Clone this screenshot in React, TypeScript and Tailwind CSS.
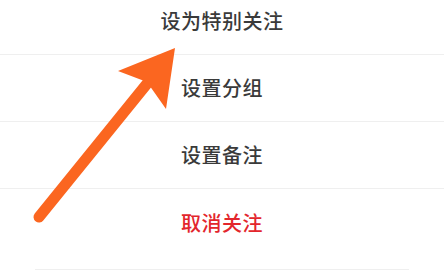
import React from 'react';

const ITEMS = [
  { label: '设为特别关注', danger: false },
  { label: '设置分组', danger: false },
  { label: '设置备注', danger: false },
  { label: '取消关注', danger: true },
];

const Arrow = () => (
  <svg className="absolute left-0 top-0 pointer-events-none" width="444" height="270" viewBox="0 0 444 270">
    <line x1="39" y1="217" x2="150" y2="80" stroke="#fb6620" strokeWidth="11" strokeLinecap="round" />
    <polygon points="175,48 118,71 147,82 166,109" fill="#fb6620" />
  </svg>
);

export default function App() {
  return (
    <div
      className="relative w-[444px] h-[270px] overflow-hidden bg-white"
      style={{ fontFamily: '"Noto Sans CJK SC", "Noto Sans", sans-serif' }}
    >
      <div className="flex flex-col -mt-3">
        {ITEMS.map((item, i) => (
          <div
            key={item.label}
            className={`h-[67px] flex items-center justify-center ${i < ITEMS.length - 1 ? 'border-b border-[#efefef]' : ''}`}
          >
            <span
              className={`text-[20px] font-medium tracking-[0.5px] ${item.danger ? 'text-[#e3262c]' : 'text-[#3a3a3a]'}`}
            >
              {item.label}
            </span>
          </div>
        ))}
      </div>
      <div className="mx-[35px] mt-[13px] h-px bg-[#efefef]" />
      <Arrow />
    </div>
  );
}
